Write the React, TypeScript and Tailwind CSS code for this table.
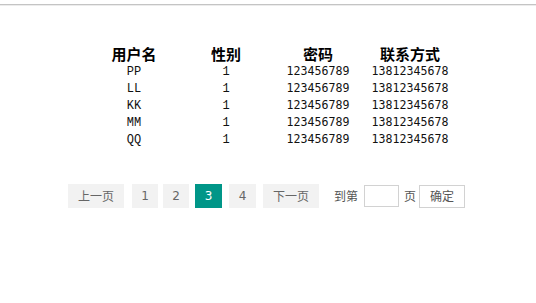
import React, { useState } from "react"

interface User {
  name: string
  sex: number
  password: string
  phone: string
}

const users: User[] = [
  { name: "PP", sex: 1, password: "123456789", phone: "13812345678" },
  { name: "LL", sex: 1, password: "123456789", phone: "13812345678" },
  { name: "KK", sex: 1, password: "123456789", phone: "13812345678" },
  { name: "MM", sex: 1, password: "123456789", phone: "13812345678" },
  { name: "QQ", sex: 1, password: "123456789", phone: "13812345678" },
]

const cjk = "font-['Noto_Sans_CJK_SC','Noto_Sans',sans-serif]"

export default function App() {
  const [page, setPage] = useState(3)
  const [jump, setJump] = useState("")

  const pageBtn = (n: number, extra: string) => (
    <button
      key={n}
      onClick={() => setPage(n)}
      className={
        "h-[24px] flex items-center justify-center text-[12px] font-['DejaVu_Sans',sans-serif] " +
        extra +
        (page === n ? " bg-[#009688] text-white" : " bg-[#f2f2f2] text-[#666]")
      }
    >
      {n}
    </button>
  )

  return (
    <div className="w-[536px] h-[303px] bg-white overflow-hidden">
      {/* top rule */}
      <div className="mt-[4px] h-px bg-[#c4c4c4]" />
      <div className="h-px bg-[#ececec]" />

      {/* user table */}
      <div className="mt-[37px] ml-[88px] w-[368px]">
        <div className={"grid grid-cols-4 h-[20px] items-center text-[15px] font-bold text-black " + cjk}>
          <div className="text-center">用户名</div>
          <div className="text-center">性别</div>
          <div className="text-center">密码</div>
          <div className="text-center">联系方式</div>
        </div>
        {users.map((u, i) => (
          <div key={i} className="grid grid-cols-4 h-[17px] items-center text-[12px] text-[#111]">
            <div className="text-center font-['Liberation_Mono',monospace]">{u.name}</div>
            <div className="text-center font-['Liberation_Mono',monospace]">{u.sex}</div>
            <div className="text-center font-['DejaVu_Sans_Mono',monospace] text-[11.6px]">{u.password}</div>
            <div className="text-center font-['DejaVu_Sans_Mono',monospace] text-[11.6px]">{u.phone}</div>
          </div>
        ))}
      </div>

      {/* pagination */}
      <div className={"mt-[36px] flex items-center text-[12px] " + cjk}>
        <button
          onClick={() => setPage(Math.max(1, page - 1))}
          className="ml-[68px] w-[56px] h-[24px] bg-[#f2f2f2] text-[#666]"
        >
          上一页
        </button>
        {pageBtn(1, "ml-[8px] w-[26px]")}
        {pageBtn(2, "ml-[5px] w-[26px]")}
        {pageBtn(3, "ml-[6px] w-[27px]")}
        {pageBtn(4, "ml-[7px] w-[27px]")}
        <button
          onClick={() => setPage(Math.min(4, page + 1))}
          className="ml-[7px] w-[56px] h-[24px] bg-[#f2f2f2] text-[#666]"
        >
          下一页
        </button>
        <span className="ml-[15px] text-[#555]">到第</span>
        <input
          value={jump}
          onChange={(e) => setJump(e.target.value)}
          className="ml-[6px] w-[35px] h-[22px] border border-[#d2d2d2] outline-none px-1"
        />
        <span className="ml-[5px] text-[#555]">页</span>
        <button
          onClick={() => {
            const n = parseInt(jump)
            if (n >= 1 && n <= 4) setPage(n)
          }}
          className="ml-[3px] w-[46px] h-[23px] border border-[#d2d2d2] bg-white text-[#555]"
        >
          确定
        </button>
      </div>
    </div>
  )
}
